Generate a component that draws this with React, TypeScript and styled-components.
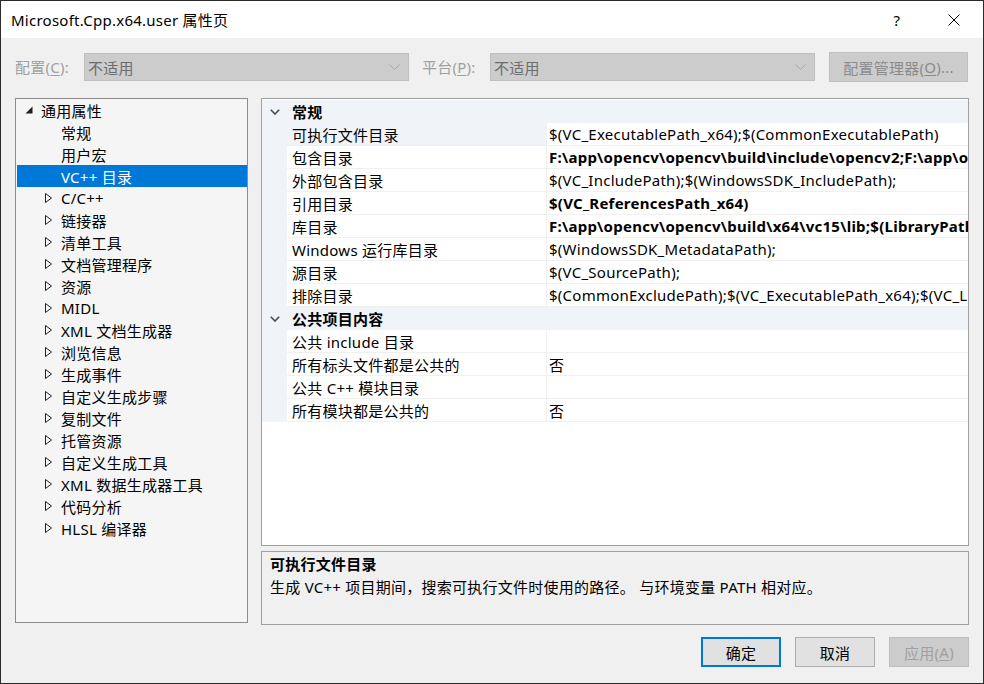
import React from "react";
import styled, { createGlobalStyle } from "styled-components";

const FONT = `"Noto Sans", "Noto Sans CJK SC", sans-serif`;

const Global = createGlobalStyle`
  html, body { margin: 0; padding: 0; background: #f0f0f0; }
  body { font-family: ${FONT}; font-size: 15px; color: #000; letter-spacing: 0.25px; }
  * { box-sizing: border-box; }
`;

const Window = styled.div`
  width: 984px;
  height: 684px;
  border: 1px solid #2b2b2b;
  background: #f0f0f0;
  display: flex;
  flex-direction: column;
  overflow: hidden;
`;

const TitleBar = styled.div`
  height: 37px;
  background: #ffffff;
  display: flex;
  align-items: center;
  padding-left: 10px;
  flex-shrink: 0;
`;

const Title = styled.div`
  flex: 1;
  font-size: 15px;
  line-height: 20px;
  color: #000;
  white-space: nowrap;
`;

const CaptionButton = styled.div<{ $w: number }>`
  width: ${(p) => p.$w}px;
  height: 37px;
  display: flex;
  align-items: center;
  justify-content: center;
  font-size: 15px;
  color: #000;
`;

const CaptionGroup = styled.div`
  display: flex;
  gap: 11px;
  padding-right: 6px;
`;

const ConfigRow = styled.div`
  margin-top: 14px;
  height: 30px;
  display: flex;
  align-items: center;
  padding-left: 14px;
  flex-shrink: 0;
`;

const DisabledLabel = styled.div<{ $w: number; $ml?: number }>`
  width: ${(p) => p.$w}px;
  margin-left: ${(p) => p.$ml ?? 0}px;
  color: #a0a0a0;
  white-space: nowrap;
  line-height: 20px;
`;

const Key = styled.span`
  text-decoration: underline;
  text-underline-offset: 2px;
`;

const Combo = styled.div`
  width: 325px;
  height: 28px;
  background: #cccccc;
  border: 1px solid #bfbfbf;
  display: flex;
  align-items: center;
  padding: 0 8px 0 3px;
  color: #6d6d6d;
  justify-content: space-between;
`;

const DisabledButton = styled.div<{ $w: number; $ml?: number }>`
  width: ${(p) => p.$w}px;
  height: 30px;
  margin-left: ${(p) => p.$ml ?? 0}px;
  background: #cccccc;
  border: 1px solid #bfbfbf;
  color: #8b8b8b;
  display: flex;
  align-items: center;
  justify-content: center;
  white-space: nowrap;
`;

const Main = styled.div`
  margin-top: 16px;
  display: flex;
  align-items: flex-start;
  padding-left: 14px;
  flex-shrink: 0;
`;

const Tree = styled.div`
  width: 233px;
  height: 525px;
  border: 1px solid #8c8c8c;
  background: #f5f5f5;
  padding: 0 0 0 1px;
  display: flex;
  flex-direction: column;
`;

const TreeRow = styled.div<{ $level: number; $selected?: boolean }>`
  height: 22px;
  display: flex;
  align-items: center;
  padding-left: ${(p) => p.$level * 20}px;
  background: ${(p) => (p.$selected ? "#0078d7" : "transparent")};
  color: ${(p) => (p.$selected ? "#ffffff" : "#000000")};
  white-space: nowrap;
`;

const Expander = styled.div`
  width: 24px;
  height: 22px;
  display: flex;
  align-items: center;
  padding-left: 8px;
  flex-shrink: 0;
`;

const RightCol = styled.div`
  margin-left: 13px;
  width: 708px;
  display: flex;
  flex-direction: column;
  gap: 5px;
`;

const Grid = styled.div`
  height: 448px;
  border: 1px solid #a0a0a0;
  background: #ffffff;
  padding-top: 1px;
  display: flex;
  flex-direction: column;
  overflow: hidden;
`;

const CategoryRow = styled.div`
  height: 23px;
  display: flex;
  align-items: center;
  background: #f0f3f8;
  flex-shrink: 0;
`;

const MarginCell = styled.div`
  width: 25px;
  height: 100%;
  background: #f0f3f8;
  display: flex;
  align-items: center;
  justify-content: center;
  flex-shrink: 0;
`;

const CategoryText = styled.div`
  padding-left: 5px;
  font-weight: bold;
`;

const PropRow = styled.div`
  height: 23px;
  display: flex;
  flex-shrink: 0;
`;

const LabelCell = styled.div<{ $selected?: boolean }>`
  width: 260px;
  height: 23px;
  border-right: 1px solid #f0f0f0;
  border-bottom: 1px solid #f0f0f0;
  background: ${(p) => (p.$selected ? "#f0f3f8" : "#ffffff")};
  padding-left: 5px;
  display: flex;
  align-items: center;
  white-space: nowrap;
  overflow: hidden;
  flex-shrink: 0;
`;

const ValueCell = styled.div<{ $bold?: boolean }>`
  flex: 1;
  min-width: 0;
  height: 23px;
  border-bottom: 1px solid #f0f0f0;
  padding-left: 2px;
  display: flex;
  align-items: center;
  white-space: nowrap;
  overflow: hidden;
  font-weight: ${(p) => (p.$bold ? "bold" : "normal")};
`;

const Desc = styled.div`
  height: 74px;
  border: 1px solid #a0a0a0;
  background: #f0f0f0;
  padding: 2px 8px 0 8px;
`;

const DescTitle = styled.div`
  font-weight: bold;
  line-height: 21px;
`;

const DescText = styled.div`
  line-height: 24px;
`;

const Footer = styled.div`
  margin-top: 12px;
  display: flex;
  justify-content: flex-end;
  gap: 14px;
  padding-right: 14px;
`;

const DialogButton = styled.div<{ $variant: "default" | "normal" | "disabled" }>`
  width: 80px;
  height: 30px;
  display: flex;
  align-items: center;
  justify-content: center;
  background: ${(p) => (p.$variant === "disabled" ? "#cccccc" : "#e1e1e1")};
  border: ${(p) =>
    p.$variant === "default"
      ? "2px solid #0078d7"
      : p.$variant === "disabled"
      ? "1px solid #bfbfbf"
      : "1px solid #adadad"};
  color: ${(p) => (p.$variant === "disabled" ? "#a0a0a0" : "#000")};
`;

const ComboChevron = () => (
  <svg width="11" height="6" viewBox="0 0 11 6">
    <polyline points="0.5,0.5 5.5,5.5 10.5,0.5" fill="none" stroke="#a8a8a8" strokeWidth="1" />
  </svg>
);

const ExpandedTri = () => (
  <svg width="8" height="8" viewBox="0 0 8 8">
    <polygon points="7.5,0.5 7.5,7.5 0.5,7.5" fill="#1e1e1e" />
  </svg>
);

const CollapsedTri = () => (
  <svg width="8" height="10" viewBox="0 0 8 10">
    <polygon points="0.5,0.5 6.5,5 0.5,9.5" fill="none" stroke="#1e1e1e" strokeWidth="1" />
  </svg>
);

const CatChevron = () => (
  <svg width="10" height="6" viewBox="0 0 10 6">
    <polyline points="0.8,0.8 5,5 9.2,0.8" fill="none" stroke="#4a4a4a" strokeWidth="1.6" />
  </svg>
);

type TreeItem = { label: string; level: number; exp?: "open" | "closed"; selected?: boolean };

const treeItems: TreeItem[] = [
  { label: "通用属性", level: 0, exp: "open" },
  { label: "常规", level: 1 },
  { label: "用户宏", level: 1 },
  { label: "VC++ 目录", level: 1, selected: true },
  { label: "C/C++", level: 1, exp: "closed" },
  { label: "链接器", level: 1, exp: "closed" },
  { label: "清单工具", level: 1, exp: "closed" },
  { label: "文档管理程序", level: 1, exp: "closed" },
  { label: "资源", level: 1, exp: "closed" },
  { label: "MIDL", level: 1, exp: "closed" },
  { label: "XML 文档生成器", level: 1, exp: "closed" },
  { label: "浏览信息", level: 1, exp: "closed" },
  { label: "生成事件", level: 1, exp: "closed" },
  { label: "自定义生成步骤", level: 1, exp: "closed" },
  { label: "复制文件", level: 1, exp: "closed" },
  { label: "托管资源", level: 1, exp: "closed" },
  { label: "自定义生成工具", level: 1, exp: "closed" },
  { label: "XML 数据生成器工具", level: 1, exp: "closed" },
  { label: "代码分析", level: 1, exp: "closed" },
  { label: "HLSL 编译器", level: 1, exp: "closed" },
];

type Prop = { label: string; value: string; bold?: boolean; selected?: boolean };
type Cat = { name: string; props: Prop[] };

const categories: Cat[] = [
  {
    name: "常规",
    props: [
      { label: "可执行文件目录", value: "$(VC_ExecutablePath_x64);$(CommonExecutablePath)", selected: true },
      { label: "包含目录", value: "F:\\app\\opencv\\opencv\\build\\include\\opencv2;F:\\app\\opencv\\opencv\\build\\include;$(IncludePath)", bold: true },
      { label: "外部包含目录", value: "$(VC_IncludePath);$(WindowsSDK_IncludePath);" },
      { label: "引用目录", value: "$(VC_ReferencesPath_x64)", bold: true },
      { label: "库目录", value: "F:\\app\\opencv\\opencv\\build\\x64\\vc15\\lib;$(LibraryPath)", bold: true },
      { label: "Windows 运行库目录", value: "$(WindowsSDK_MetadataPath);" },
      { label: "源目录", value: "$(VC_SourcePath);" },
      { label: "排除目录", value: "$(CommonExcludePath);$(VC_ExecutablePath_x64);$(VC_LibraryPath_x64)" },
    ],
  },
  {
    name: "公共项目内容",
    props: [
      { label: "公共 include 目录", value: "" },
      { label: "所有标头文件都是公共的", value: "否" },
      { label: "公共 C++ 模块目录", value: "" },
      { label: "所有模块都是公共的", value: "否" },
    ],
  },
];

export default function App() {
  return (
    <>
      <Global />
      <Window>
        <TitleBar>
          <Title>Microsoft.Cpp.x64.user 属性页</Title>
          <CaptionGroup>
            <CaptionButton $w={46}>?</CaptionButton>
            <CaptionButton $w={46}>
              <svg width="12" height="12" viewBox="0 0 12 12">
                <path d="M0.5,0.5 L11.5,11.5 M11.5,0.5 L0.5,11.5" stroke="#000" strokeWidth="1" />
              </svg>
            </CaptionButton>
          </CaptionGroup>
        </TitleBar>

        <ConfigRow>
          <DisabledLabel $w={69}>
            配置(<Key>C</Key>):
          </DisabledLabel>
          <Combo>
            <span>不适用</span>
            <ComboChevron />
          </Combo>
          <DisabledLabel $w={68} $ml={13}>
            平台(<Key>P</Key>):
          </DisabledLabel>
          <Combo>
            <span>不适用</span>
            <ComboChevron />
          </Combo>
          <DisabledButton $w={139} $ml={14}>
            配置管理器(<Key>O</Key>)...
          </DisabledButton>
        </ConfigRow>

        <Main>
          <Tree>
            {treeItems.map((t) => (
              <TreeRow key={t.label} $level={t.level} $selected={t.selected}>
                <Expander>
                  {t.exp === "open" && <ExpandedTri />}
                  {t.exp === "closed" && <CollapsedTri />}
                </Expander>
                <span>{t.label}</span>
              </TreeRow>
            ))}
          </Tree>

          <RightCol>
            <Grid>
              {categories.map((c) => (
                <React.Fragment key={c.name}>
                  <CategoryRow>
                    <MarginCell>
                      <CatChevron />
                    </MarginCell>
                    <CategoryText>{c.name}</CategoryText>
                  </CategoryRow>
                  {c.props.map((p) => (
                    <PropRow key={p.label}>
                      <MarginCell />
                      <LabelCell $selected={p.selected}>{p.label}</LabelCell>
                      <ValueCell $bold={p.bold}>{p.value}</ValueCell>
                    </PropRow>
                  ))}
                </React.Fragment>
              ))}
            </Grid>
            <Desc>
              <DescTitle>可执行文件目录</DescTitle>
              <DescText>生成 VC++ 项目期间，搜索可执行文件时使用的路径。 与环境变量 PATH 相对应。</DescText>
            </Desc>
          </RightCol>
        </Main>

        <Footer>
          <DialogButton $variant="default">确定</DialogButton>
          <DialogButton $variant="normal">取消</DialogButton>
          <DialogButton $variant="disabled">
            应用(<Key>A</Key>)
          </DialogButton>
        </Footer>
      </Window>
    </>
  );
}
